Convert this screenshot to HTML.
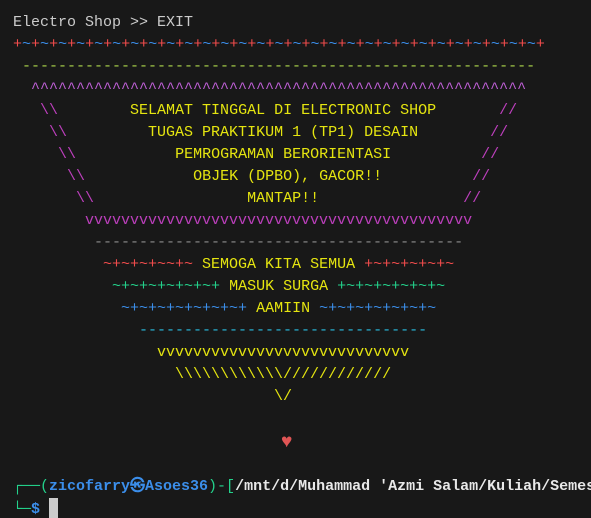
<!DOCTYPE html>
<html><head><meta charset="utf-8"><style>
html,body{margin:0;padding:0;background:#181818;width:591px;height:518px;overflow:hidden}
pre{margin:0;padding:12px 0 0 13px;font-family:"Liberation Mono","DejaVu Sans Mono",monospace;font-size:15px;line-height:22px;color:#cccccc;white-space:pre;overflow:hidden;width:578px}
.y{color:#e5e510}.r{color:#f14c4c}.b{color:#3b8eea}.g{color:#23d18b}.m{color:#bc3fbc}.c{color:#29b8db}.gr{color:#8a8a8a}
.pl b{color:#f14c4c;font-weight:normal}.pl{color:#3b8eea}
.bd{font-weight:bold}.w{color:#e8e8e8}
.cur{display:inline-block;width:9px;height:20px;background:#cccccc;vertical-align:-5px}
.h{color:#e05555;font-size:19px;display:inline-block;width:9px;position:relative;left:-2px;top:1px}
</style></head><body><pre>Electro Shop &gt;&gt; EXIT
<span class="pl"><b>+</b>~<b>+</b>~<b>+</b>~<b>+</b>~<b>+</b>~<b>+</b>~<b>+</b>~<b>+</b>~<b>+</b>~<b>+</b>~<b>+</b>~<b>+</b>~<b>+</b>~<b>+</b>~<b>+</b>~<b>+</b>~<b>+</b>~<b>+</b>~<b>+</b>~<b>+</b>~<b>+</b>~<b>+</b>~<b>+</b>~<b>+</b>~<b>+</b>~<b>+</b>~<b>+</b>~<b>+</b>~<b>+</b>~<b>+</b></span>
 <span style="color:#a9d24a">---------------------------------------------------------</span>
  <span style="color:#c060d8">^^^^^^^^^^^^^^^^^^^^^^^^^^^^^^^^^^^^^^^^^^^^^^^^^^^^^^^</span>
   <span class="m">\\</span>        <span class="y">SELAMAT TINGGAL DI ELECTRONIC SHOP</span>       <span class="m">//</span>
    <span class="m">\\</span>         <span class="y">TUGAS PRAKTIKUM 1 (TP1) DESAIN</span>        <span class="m">//</span>
     <span class="m">\\</span>           <span class="y">PEMROGRAMAN BERORIENTASI</span>          <span class="m">//</span>
      <span class="m">\\</span>            <span class="y">OBJEK (DPBO), GACOR!!</span>          <span class="m">//</span>
       <span class="m">\\</span>                 <span class="y">MANTAP!!</span>                <span class="m">//</span>
        <span class="m">vvvvvvvvvvvvvvvvvvvvvvvvvvvvvvvvvvvvvvvvvvv</span>
         <span class="gr">-----------------------------------------</span>
          <span class="r">~+~+~+~~+~</span> <span class="y">SEMOGA KITA SEMUA</span> <span class="r">+~+~+~+~+~</span>
           <span class="g">~+~+~+~+~+~+</span> <span class="y">MASUK SURGA</span> <span class="g">+~+~+~+~+~+~</span>
            <span class="b">~+~+~+~+~+~+~+</span> <span class="y">AAMIIN</span> <span class="b">~+~+~+~+~+~+~</span>
              <span class="c">--------------------------------</span>
                <span class="y">vvvvvvvvvvvvvvvvvvvvvvvvvvvv</span>
                  <span class="y">\\\\\\\\\\\\////////////</span>
                             <span class="y">\/</span>

                              <span class="h">♥</span>

<span class="g">┌──(</span><span class="b bd">zicofarry㉿Asoes36</span><span class="g">)-[</span><span class="w bd">/mnt/d/Muhammad 'Azmi Salam/Kuliah/Semes</span>
<span class="g">└─</span><span class="b bd">$</span> <span class="cur"></span></pre></body></html>
